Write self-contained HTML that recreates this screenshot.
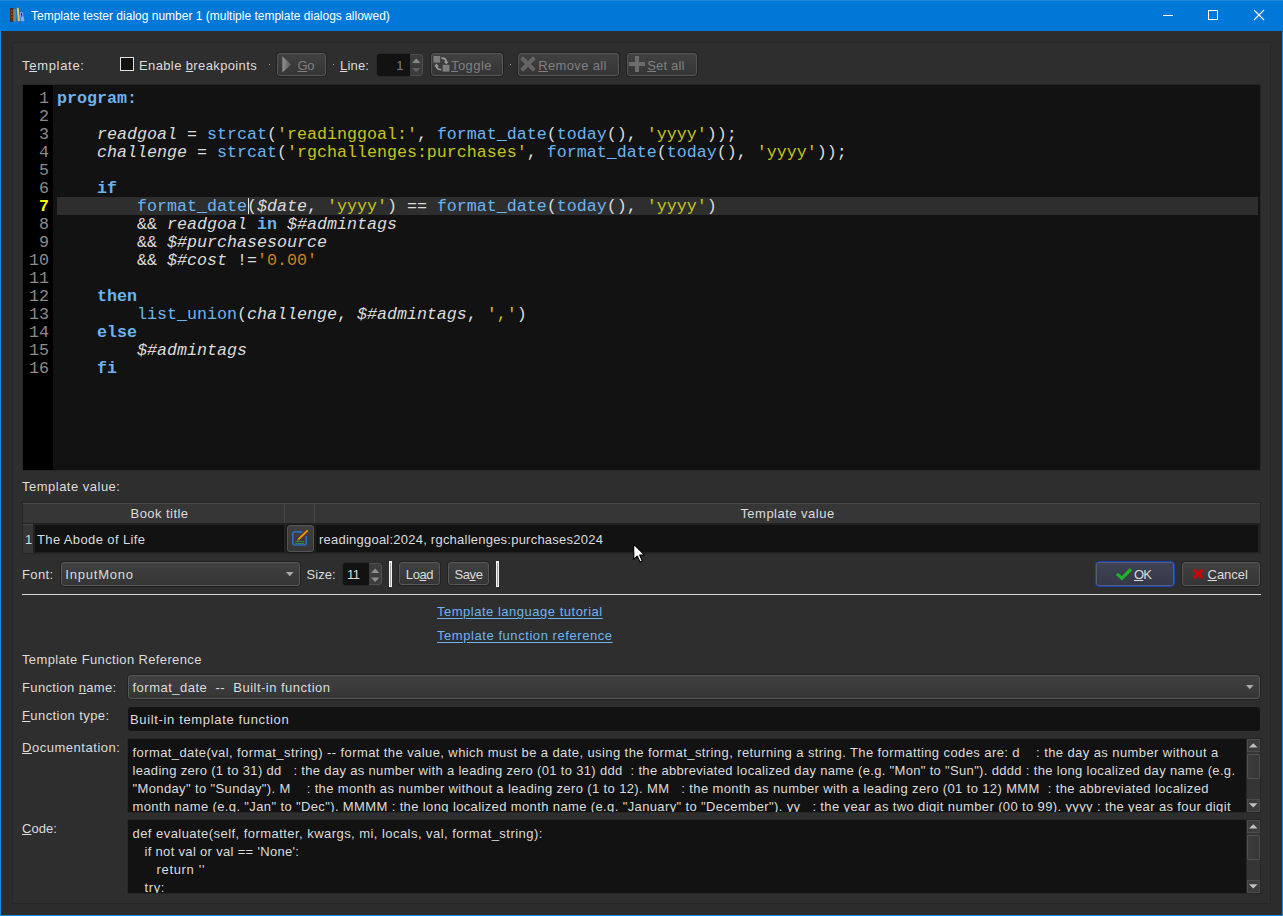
<!DOCTYPE html>
<html lang="en">
<head>
<meta charset="utf-8">
<title>Template tester dialog number 1 (multiple template dialogs allowed)</title>
<style>
*{box-sizing:border-box;margin:0;padding:0}
html,body{width:1283px;height:916px;overflow:hidden;background:#2d2d2d}
body{position:relative;font-family:"Liberation Sans","DejaVu Sans",sans-serif;font-size:13px;color:#dcdcdc}
.abs{position:absolute}
#win{position:absolute;left:0;top:0;width:1283px;height:916px;border:1px solid #1a8ae4;background:#2c2c2c}
#titlebar{position:absolute;left:0;top:0;width:1283px;height:31px;background:#0078d7}
#titlebar .t{position:absolute;left:31px;top:9px;font-size:12px;color:#fff;white-space:nowrap;line-height:15px}
#frame{position:absolute;left:12px;top:42px;width:1259px;height:862px;border:1px solid #272727;background:#2e2e2e}
.lbl{margin-top:1px;position:absolute;white-space:nowrap;line-height:16px;font-size:13px;color:#dcdcdc;letter-spacing:0.41px}
.u{text-decoration:underline;text-underline-offset:1px}
.btn{letter-spacing:0.41px;position:absolute;border:1px solid #585858;border-radius:3px;background:linear-gradient(#414141,#353535);color:#dcdcdc;font-size:13px;white-space:nowrap;box-shadow:0 0 0 1px rgba(0,0,0,.25)}
.btn.dis{color:#808080;border-color:#555}
.btn span.tx{position:absolute;top:4px;line-height:16px}
.field{position:absolute;background:#121212;border:1px solid #141414;border-radius:3px}
#editor{position:absolute;left:22px;top:84px;width:1239px;height:387px;border:1px solid #272727;background:#121212;overflow:hidden}
#gutter{position:absolute;left:0;top:0;width:30px;height:385px;background:#000}
.code{font-family:"Liberation Mono","DejaVu Sans Mono",monospace;font-size:16.67px;line-height:18px;white-space:pre}
#gutter div{position:absolute;right:4px;width:26px;text-align:right;color:#8c8c8c;height:18px}
#lines{position:absolute;left:34px;top:5px;right:2px}
#lines div{height:18px;color:#dcdcdc}
.k{color:#6cb4f0;font-weight:bold}
.f{color:#6cb4f0}
.s{color:#c4c420}
.i{font-style:italic;color:#dcdcdc}
.n{color:#d08020}
.hdr{background:#363636}
.link{color:#6cb4f0;text-decoration:underline;text-underline-offset:2px}
.doc{white-space:pre}
.sb{position:absolute;width:13px;background:#353535;box-shadow:0 0 0 1px #262626}
.field.nb{border:none;border-radius:0;box-shadow:0 0 0 1px #272727}
.sb .th{background:linear-gradient(90deg,#3d3d3d,#363636);border:1px solid #505050;border-radius:1px}
.sb .ab{background:#3c3c3c;border:1px solid #4c4c4c}
</style>
</head>
<body>
<div id="win"></div>
<div id="titlebar">
  <svg class="abs" style="left:10px;top:7px" width="15" height="15" viewBox="0 0 15 15">
    <rect x="0.1" y="1" width="3.1" height="13.7" fill="#5c2402"/>
    <rect x="1" y="3" width="1.3" height="1.6" fill="#8a5a22"/><rect x="1" y="6.2" width="1.3" height="1.6" fill="#94601e"/><rect x="1" y="9.6" width="1.3" height="1.4" fill="#9a5c10"/><rect x="1" y="12" width="1.3" height="1" fill="#8a4a08"/>
    <rect x="3.2" y="2.2" width="3.1" height="12.5" fill="#6f8188"/>
    <polygon points="6.7,0.7 8.7,0.5 10.1,14.6 8,14.8" fill="#e9c254"/>
    <polygon points="6.7,0.7 8.7,0.5 8.75,1.1 6.75,1.3" fill="#7a4a10"/>
    <polygon points="7.95,14.2 10.05,14 10.1,14.6 8,14.8" fill="#4a2a50"/>
    <polygon points="9.8,5.2 12.7,5.2 14.5,13.9 10.9,14.3" fill="#86a6ff"/>
    <path d="M11.3 6.1l.55 3.6" stroke="#1a20c2" stroke-width="1.1" fill="none"/>
  </svg>
  <div class="t">Template tester dialog number 1 (multiple template dialogs allowed)</div>
  <svg class="abs" style="left:1160px;top:0" width="123" height="31" viewBox="0 0 123 31">
    <path d="M3 15.5h10" stroke="#fff" stroke-width="1" fill="none"/>
    <rect x="48.5" y="10.5" width="9" height="9" stroke="#fff" stroke-width="1" fill="none"/>
    <path d="M94 10l10 10M104 10l-10 10" stroke="#fff" stroke-width="1.1" fill="none"/>
  </svg>
</div>
<div class="abs" style="left:0;top:0;width:1283px;height:1px;background:#2285dc"></div>
<div id="frame"></div>

<!-- toolbar row -->
<div class="lbl" style="letter-spacing:0.697px;left:22px;top:57px">T<span class="u">e</span>mplate:</div>
<div class="abs" style="left:120px;top:57px;width:14px;height:14px;border:1px solid #e2e2e2;background:#121212;border-radius:0"></div>
<div class="lbl" style="letter-spacing:0.376px;left:139px;top:57px">Enable <span class="u">b</span>reakpoints</div>
<div class="abs" style="left:269px;top:64px;width:1px;height:1px;background:#aaa"></div>
<div class="btn dis" style="left:277px;top:53px;width:49px;height:23px">
  <svg class="abs" style="left:4px;top:2px" width="10" height="17" viewBox="0 0 10 17"><defs><linearGradient id="gtri" x1="0" x2="1" y1="0" y2="0"><stop offset="0" stop-color="#909090"/><stop offset="1" stop-color="#5c5c5c"/></linearGradient></defs><polygon points="0.4,0.2 9,8.4 0.4,16.6" fill="url(#gtri)"/></svg>
  <span class="tx" style="letter-spacing:-0.373px;left:19.5px"><span class="u">G</span>o</span></div>
<div class="abs" style="left:333px;top:64px;width:1px;height:1px;background:#aaa"></div>
<div class="lbl" style="letter-spacing:0.177px;left:340px;top:57px"><span class="u">L</span>ine:</div>
<div class="abs" style="left:377px;top:54px;width:33px;height:22px;background:#121212;border-radius:3px 0 0 3px;box-shadow:0 0 0 1px #292929"></div>
<div class="lbl" style="left:376px;top:57px;width:28px;text-align:right;color:#808080">1</div>
<div class="abs" style="left:410px;top:54px;width:13px;height:22px;background:#3b3b3b;border:1px solid #4e4e4e;border-left:none;border-radius:0 4px 4px 0">
  <svg class="abs" style="left:2px;top:3px" width="9" height="15" viewBox="0 0 9 15"><polygon points="0,5 4.2,0.6 8.4,5" fill="#8a8a8a"/><polygon points="0,10 4.2,14.2 8.4,10" fill="#606060"/></svg>
</div>
<div class="btn dis" style="left:431px;top:53px;width:72px;height:23px">
  <svg class="abs" style="left:1px;top:1px" width="18" height="18" viewBox="0 0 18 18">
    <rect x="0.5" y="1" width="6.6" height="6.6" fill="#7e7e7e"/><rect x="9.6" y="9.8" width="6.8" height="6.8" fill="#7e7e7e"/>
    <path d="M8.4 3.2c3.4-.1 4.8 1.5 4.9 3.8" stroke="#9a9a9a" stroke-width="1.7" fill="none"/><polygon points="10.8,6.4 15.8,6.4 13.3,9.2" fill="#9a9a9a"/>
    <path d="M8.2 14.6c-3.3.1-4.6-1.7-4.7-3.8" stroke="#9a9a9a" stroke-width="1.7" fill="none"/><polygon points="1,11.4 6,11.4 3.5,8.6" fill="#9a9a9a"/>
  </svg>
  <span class="tx" style="letter-spacing:0.434px;left:19px"><span class="u">T</span>oggle</span></div>
<div class="abs" style="left:510px;top:64px;width:1px;height:1px;background:#aaa"></div>
<div class="btn dis" style="left:518px;top:53px;width:101px;height:23px">
  <svg class="abs" style="left:1px;top:2px" width="16" height="16" viewBox="0 0 16 16"><path d="M1.7 1.7l12.6 12.6M14.3 1.7L1.7 14.3" stroke="#646464" stroke-width="4.1" fill="none"/></svg>
  <span class="tx" style="letter-spacing:0.344px;left:19.3px"><span class="u">R</span>emove all</span></div>
<div class="btn dis" style="left:627px;top:53px;width:70px;height:23px">
  <svg class="abs" style="left:1px;top:2px" width="16" height="16" viewBox="0 0 16 16"><path d="M8 0v16M0 8h16" stroke="#6c6c6c" stroke-width="4" fill="none"/></svg>
  <span class="tx" style="letter-spacing:0.194px;left:19.2px"><span class="u">S</span>et all</span></div>

<!-- editor -->
<div id="editor">
  <div id="gutter" class="code">
    <div style="top:5px">1</div><div style="top:23px">2</div><div style="top:41px">3</div><div style="top:59px">4</div><div style="top:77px">5</div><div style="top:95px">6</div><div style="top:113px;color:#ffff00;font-weight:bold">7</div><div style="top:131px">8</div><div style="top:149px">9</div><div style="top:167px">10</div><div style="top:185px">11</div><div style="top:203px">12</div><div style="top:221px">13</div><div style="top:239px">14</div><div style="top:257px">15</div><div style="top:275px">16</div>
  </div>
  <div class="abs" style="left:34px;top:112px;width:1201px;height:18px;background:#2e2e2e"></div>
  <div class="abs" style="left:225px;top:113px;width:1px;height:16px;background:#e8e8e8"></div>
  <div id="lines" class="code"><div><span class="k">program:</span></div><div> </div><div>    <span class="i">readgoal</span> = <span class="f">strcat</span>(<span class="s">'readinggoal:'</span>, <span class="f">format_date</span>(<span class="f">today</span>(), <span class="s">'yyyy'</span>));</div><div>    <span class="i">challenge</span> = <span class="f">strcat</span>(<span class="s">'rgchallenges:purchases'</span>, <span class="f">format_date</span>(<span class="f">today</span>(), <span class="s">'yyyy'</span>));</div><div> </div><div>    <span class="k">if</span></div><div>        <span class="f">format_date</span>(<span class="i">$date</span>, <span class="s">'yyyy'</span>) == <span class="f">format_date</span>(<span class="f">today</span>(), <span class="s">'yyyy'</span>)</div><div>        &amp;&amp; <span class="i">readgoal</span> <span class="k">in</span> <span class="i">$#admintags</span></div><div>        &amp;&amp; <span class="i">$#purchasesource</span></div><div>        &amp;&amp; <span class="i">$#cost</span> !=<span class="n">'0.00'</span></div><div> </div><div>    <span class="k">then</span></div><div>        <span class="f">list_union</span>(<span class="i">challenge</span>, <span class="i">$#admintags</span>, <span class="s">','</span>)</div><div>    <span class="k">else</span></div><div>        <span class="i">$#admintags</span></div><div>    <span class="k">fi</span></div></div>
</div>

<!-- template value -->
<div class="lbl" style="letter-spacing:0.492px;left:22px;top:478px">Template value:</div>
<div class="abs" style="left:22px;top:502px;width:1239px;height:52px;background:#222;border:1px solid #262626"></div>
<div class="abs hdr" style="left:23px;top:503px;width:1237px;height:20px;border-top:1px solid #474747"></div>
<div class="abs" style="left:284px;top:503px;width:1px;height:20px;background:#484848"></div>
<div class="abs" style="left:314px;top:503px;width:1px;height:20px;background:#484848"></div>
<div class="abs" style="left:23px;top:524px;width:1237px;height:29px;background:#212121"></div>
<div class="abs hdr" style="left:23px;top:524px;width:10px;height:29px;border-top:1px solid #474747"></div>
<div class="lbl" style="letter-spacing:0.444px;left:34px;top:505px;width:251px;text-align:center">Book title</div>
<div class="lbl" style="letter-spacing:0.485px;left:315px;top:505px;width:945px;text-align:center">Template value</div>
<div class="lbl" style="left:25px;top:531px">1</div>
<div class="abs" style="left:35px;top:525px;width:249px;height:27px;background:#121212"></div>
<div class="lbl" style="letter-spacing:0.380px;left:37px;top:531px">The Abode of Life</div>
<div class="btn" style="left:287px;top:525px;width:27px;height:27px;border-color:#555;border-radius:3px">
  <svg class="abs" style="left:-1px;top:-1px" width="27" height="27" viewBox="0 0 27 27">
    <path d="M15.2 6.8H7.7a1.9 1.9 0 0 0-1.9 1.9v9.4a1.9 1.9 0 0 0 1.9 1.9h9.6a1.9 1.9 0 0 0 1.9-1.9V10.8" stroke="#2b6cc0" stroke-width="1.7" fill="none"/>
    <path d="M8.2 16.6h8.8M8.2 18.5h8.8" stroke="#2f8f40" stroke-width="0.9"/>
    <path d="M11.5 14.3l9.2-8.9" stroke="#f39200" stroke-width="1.9" fill="none"/>
    <circle cx="10.9" cy="14.9" r="0.7" fill="#f7a020"/>
  </svg>
</div>
<div class="abs" style="left:316px;top:525px;width:942px;height:27px;background:#121212"></div>
<div class="lbl" style="letter-spacing:0.231px;left:319px;top:531px">readinggoal:2024, rgchallenges:purchases2024</div>
<svg class="abs" style="left:633px;top:543px" width="13" height="20" viewBox="0 0 13 20"><path d="M0.7 1.2V16.4L4.2 13.1 7 19 9.4 17.9 6.7 12.1H11.6Z" fill="#fff" stroke="#000008" stroke-width="1.2" stroke-linejoin="round"/></svg>

<!-- font row -->
<div class="lbl" style="letter-spacing:0.394px;left:22px;top:566px">Font:</div>
<div class="btn" style="left:61px;top:562px;width:239px;height:24px"><span class="tx" style="letter-spacing:0.796px;left:3.3px">InputMono</span>
  <svg class="abs" style="left:224px;top:9px" width="8" height="5" viewBox="0 0 8 5"><polygon points="0,0 7.6,0 3.8,4.2" fill="#acacac"/></svg></div>
<div class="lbl" style="letter-spacing:0.021px;left:306.6px;top:566px">Size:</div>
<div class="abs" style="left:343px;top:563px;width:26px;height:22px;background:#121212;border-radius:3px 0 0 3px;box-shadow:0 0 0 1px #292929"></div>
<div class="lbl" style="letter-spacing:-0.600px;left:347px;top:566px">11</div>
<div class="abs" style="left:369px;top:563px;width:13px;height:22px;background:#3d3d3d;border:1px solid #505050;border-left:none;border-radius:0 4px 4px 0">
  <svg class="abs" style="left:2px;top:4px" width="9" height="15" viewBox="0 0 9 15"><polygon points="0,5 4.2,0.6 8.4,5" fill="#909090"/><polygon points="0,9.6 4.2,14 8.4,9.6" fill="#909090"/></svg>
</div>
<div class="abs" style="left:389px;top:561px;width:3px;height:26px;background:#f4f4f4"><div class="abs" style="left:1px;top:2px;width:1px;height:23px;background:#a4a4a4"></div></div>
<div class="btn" style="left:399px;top:562px;width:41px;height:23px"><span class="tx" style="letter-spacing:-0.411px;left:0;width:39px;text-align:center">Lo<span class="u">a</span>d</span></div>
<div class="btn" style="left:448px;top:562px;width:41px;height:23px"><span class="tx" style="letter-spacing:-0.440px;left:0;width:39px;text-align:center">Sa<span class="u">v</span>e</span></div>
<div class="abs" style="left:496px;top:561px;width:3px;height:26px;background:#f4f4f4"><div class="abs" style="left:1px;top:2px;width:1px;height:23px;background:#a4a4a4"></div></div>
<div class="btn" style="left:1095px;top:561px;width:80px;height:26px;border:1px solid #1444c0;background:linear-gradient(#3f4455,#343849);border-radius:4px;box-shadow:inset 0 0 0 1px #5a5e6c">
  <svg class="abs" style="left:19px;top:5px" width="18" height="15" viewBox="0 0 18 15"><path d="M1.9 6.9l5 4.4L16 2.2" stroke="#1eb42a" stroke-width="3.2" fill="none" stroke-linejoin="miter"/></svg>
  <span class="tx" style="letter-spacing:-0.865px;left:38px;top:5px"><span class="u">O</span>K</span></div>
<div class="btn" style="left:1182px;top:562px;width:78px;height:24px">
  <svg class="abs" style="left:9px;top:5px" width="13" height="13" viewBox="0 0 13 13"><path d="M1.8 1.6l8.9 8.6M10.7 1.6L1.8 10.2" stroke="#c80808" stroke-width="3.2" fill="none"/></svg>
  <span class="tx" style="letter-spacing:-0.049px;left:24.6px"><span class="u">C</span>ancel</span></div>
<div class="abs" style="left:22px;top:594px;width:1239px;height:1px;background:#d8d8d8"></div>

<!-- links -->
<div class="lbl link" style="letter-spacing:0.510px;left:437px;top:603px">Template language tutorial</div>
<div class="lbl link" style="letter-spacing:0.561px;left:437px;top:627px">Template function reference</div>

<!-- function reference -->
<div class="lbl" style="letter-spacing:0.369px;left:22px;top:651px">Template Function Reference</div>
<div class="lbl" style="letter-spacing:0.354px;left:22px;top:679px">Function <span class="u">n</span>ame:</div>
<div class="btn" style="left:128px;top:675px;width:1132px;height:24px"><span class="tx" style="letter-spacing:0.488px;left:3.5px;white-space:pre">format_date  --  Built-in function</span>
  <svg class="abs" style="left:1117px;top:9px" width="8" height="5" viewBox="0 0 8 5"><polygon points="0,0 7.6,0 3.8,4.2" fill="#acacac"/></svg></div>
<div class="lbl" style="letter-spacing:0.417px;left:22px;top:707px"><span class="u">F</span>unction type:</div>
<div class="field" style="left:128px;top:707px;width:1132px;height:24px"></div>
<div class="lbl" style="letter-spacing:0.653px;left:130px;top:711px">Built-in template function</div>
<div class="lbl" style="letter-spacing:0.529px;left:22px;top:739px"><span class="u">D</span>ocumentation:</div>
<div class="sb" style="left:1247px;top:739px;height:73px">
  <div class="abs ab" style="left:0;top:0;width:13px;height:13px"></div>
  <svg class="abs" style="left:2px;top:4px" width="9" height="5" viewBox="0 0 9 5"><polygon points="0,4.4 8.6,4.4 4.3,0.2" fill="#c0c0c0"/></svg>
  <div class="abs th" style="left:0;top:15px;width:13px;height:25px"></div>
  <div class="abs ab" style="left:0;top:60px;width:13px;height:13px"></div>
  <svg class="abs" style="left:2px;top:64px" width="9" height="5" viewBox="0 0 9 5"><polygon points="0,0.2 8.6,0.2 4.3,4.4" fill="#c0c0c0"/></svg>
</div>
<div class="field nb" style="left:128px;top:739px;width:1118px;height:73px;overflow:hidden">
  <div class="lbl doc" style="letter-spacing:0.411px;left:4.5px;top:5px">format_date(val, format_string) -- format the value, which must be a date, using the format_string, returning a string. The formatting codes are: d    : the day as number without a</div>
  <div class="lbl doc" style="letter-spacing:0.328px;left:4.5px;top:23px">leading zero (1 to 31) dd   : the day as number with a leading zero (01 to 31) ddd  : the abbreviated localized day name (e.g. "Mon" to "Sun"). dddd : the long localized day name (e.g.</div>
  <div class="lbl doc" style="letter-spacing:0.374px;left:4.5px;top:41px">"Monday" to "Sunday"). M    : the month as number without a leading zero (1 to 12). MM   : the month as number with a leading zero (01 to 12) MMM  : the abbreviated localized</div>
  <div class="lbl doc" style="letter-spacing:0.374px;left:4.5px;top:59px">month name (e.g. "Jan" to "Dec"). MMMM : the long localized month name (e.g. "January" to "December"). yy   : the year as two digit number (00 to 99). yyyy : the year as four digit</div>
</div>
<div class="lbl" style="letter-spacing:0.044px;left:22px;top:820px"><span class="u">C</span>ode:</div>
<div class="sb" style="left:1247px;top:820px;height:73px">
  <div class="abs ab" style="left:0;top:0;width:13px;height:13px"></div>
  <svg class="abs" style="left:2px;top:4px" width="9" height="5" viewBox="0 0 9 5"><polygon points="0,4.4 8.6,4.4 4.3,0.2" fill="#c0c0c0"/></svg>
  <div class="abs th" style="left:0;top:15px;width:13px;height:25px"></div>
  <div class="abs ab" style="left:0;top:60px;width:13px;height:13px"></div>
  <svg class="abs" style="left:2px;top:64px" width="9" height="5" viewBox="0 0 9 5"><polygon points="0,0.2 8.6,0.2 4.3,4.4" fill="#c0c0c0"/></svg>
</div>
<div class="field nb" style="left:128px;top:820px;width:1118px;height:73px;overflow:hidden">
  <div class="lbl doc" style="letter-spacing:0.452px;left:4.5px;top:5px">def evaluate(self, formatter, kwargs, mi, locals, val, format_string):</div>
  <div class="lbl doc" style="letter-spacing:0.317px;left:16.5px;top:23px">if not val or val == 'None':</div>
  <div class="lbl doc" style="letter-spacing:0.677px;left:28.5px;top:41px">return ''</div>
  <div class="lbl doc" style="letter-spacing:0.639px;left:16.5px;top:59px">try:</div>
</div>

</body>
</html>
